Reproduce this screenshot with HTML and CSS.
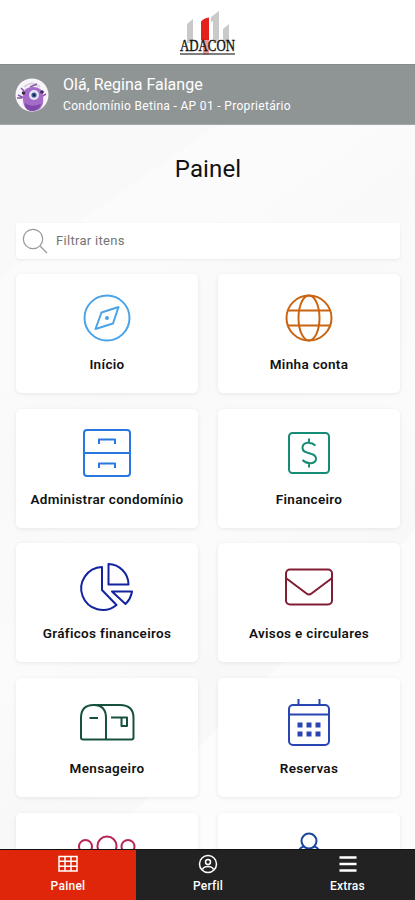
FILE: index.html
```html
<!DOCTYPE html>
<html lang="pt-BR">
<head>
<meta charset="utf-8">
<meta name="viewport" content="width=device-width, initial-scale=1">
<title>Painel</title>
<link rel="stylesheet" href="styles.css">
</head>
<body>
<div class="app">
  <header class="brand">
    <svg class="logo" viewBox="0 0 60 52" width="60" height="52">
      <path class="tower" d="M9 15l6-5v24H9zM33 8l8-6v32h-6V12l-2 1zM45 20l6-5v19h-6z"/>
      <path class="tower-red" d="M23 12.500q3-3.500 8-4v37h-6V34h-2z"/>
      <path class="veil" d="M23 31h9v14h-9z"/>
      <text x="2" y="42" textLength="55" lengthAdjust="spacingAndGlyphs">ADACON</text>
      <path class="rule" d="M2 45h55"/>
    </svg>
  </header>
  <section class="user">
    <svg class="avatar" viewBox="0 0 34 34" width="34" height="34">
      <circle cx="17" cy="17" r="16.500" fill="#f7f5f9"/>
      <path d="M9 9q8-7 16 0" fill="none" stroke="#d8d3dc" stroke-width="2"/>
      <path d="M3 17l6 3M2 20h5M31 16l-5 3M15 9l7-3M9 13l-3-3" stroke="#8d55ad" stroke-width="1.500"/>
      <path d="M8 18q0-9 10-9t10 9q2 15-11 15Q7 32 8 18z" fill="#a56bc9"/>
      <path d="M10 25q5 5 16 1-2 7-9 7t-7-8z" fill="#8148a8"/>
      <circle cx="8.500" cy="15" r="1.800" fill="#3c2a50"/><circle cx="27" cy="14" r="1.800" fill="#3c2a50"/>
      <circle cx="19" cy="17" r="5" fill="#e8e4f4"/><circle cx="19" cy="17" r="2.600" fill="#3a5a96"/><circle cx="19" cy="17" r="1.200" fill="#15284e"/>
    </svg>
    <div class="who">
      <div class="hello">Olá, Regina Falange</div>
      <div class="unit">Condomínio Betina - AP 01 - Proprietário</div>
    </div>
  </section>
  <main class="content">
    <h1>Painel</h1>
    <label class="search">
      <svg viewBox="0 0 26 26" width="26" height="26"><circle cx="11" cy="11" r="9.700"/><path d="M18 18l7 7"/></svg>
      <span>Filtrar itens</span>
    </label>
    <div class="grid">
      <a class="card"><svg class="icon sky" viewBox="0 0 60 60"><circle cx="30" cy="30" r="22.500"/><path d="M41.500 19l-5.500 16.500L18.500 41l6-16.500z"/><circle class="solid" cx="30" cy="30" r="2"/></svg><span>Início</span></a>
      <a class="card"><svg class="icon orange" viewBox="0 0 60 60"><circle cx="30" cy="30" r="22.500"/><ellipse cx="30" cy="30" rx="10.500" ry="22.500"/><path d="M9 22.500h42M9 37.500h42"/></svg><span>Minha conta</span></a>
      <a class="card"><svg class="icon blue" viewBox="0 0 60 60"><rect x="7" y="7" width="46" height="46" rx="3"/><path d="M7 30h46M22 21v-4.500h16V21M22 45v-4.500h16V45"/></svg><span>Administrar condomínio</span></a>
      <a class="card"><svg class="icon teal" viewBox="0 0 60 60"><rect x="10" y="10" width="40" height="40" rx="3.500"/><path d="M30 15.500v4M30 40v4.500M36.500 22.500C32 18.500 23.500 18.500 23.500 25c0 7 13.500 3.500 13.500 10.500 0 6-9 6-13.500 1.500"/></svg><span>Financeiro</span></a>
      <a class="card"><svg class="icon navy" viewBox="0 0 60 60"><path d="M25 10v23L39.500 48A21.500 21.500 0 1 1 25 10zM31.500 7v20.500h20A20.500 20.500 0 0 0 31.500 7zM35 34.500h20q-1 7-6.500 12.500z"/></svg><span>Gráficos financeiros</span></a>
      <a class="card"><svg class="icon wine" viewBox="0 0 60 60"><rect x="7" y="12.500" width="46" height="35" rx="4"/><path d="M7.500 21.500L27.500 36.500q2.500 2 5 0L52.500 21.500"/></svg><span>Avisos e circulares</span></a>
      <a class="card"><svg class="icon green" viewBox="0 0 60 60"><path d="M6 47.500a2 2 0 0 1-2-2V26q0-13 12.500-13T29 26v21.500zM16.500 13H43q13.500 0 13.500 13v19.500q0 2-2 2H29M12.500 26h8.500M34 25.500h16V34h-5.500v-8"/></svg><span>Mensageiro</span></a>
      <a class="card"><svg class="icon royal" viewBox="0 0 60 60"><rect x="10" y="13" width="40" height="40" rx="4"/><path d="M10 22.500h40M19.500 7v6M40.500 7v6"/><path class="solid" d="M18.500 30.500h5v5h-5zM27.500 30.500h5v5h-5zM36.500 30.500h5v5h-5zM18.500 39.500h5v5h-5zM27.500 39.500h5v5h-5zM36.500 39.500h5v5h-5z"/></svg><span>Reservas</span></a>
      <a class="card"><svg class="icon pink" viewBox="0 0 60 60"><circle cx="30" cy="19" r="9.500"/><circle cx="8.500" cy="19.500" r="6.500"/><circle cx="51" cy="19.500" r="6.500"/></svg></a>
      <a class="card"><svg class="icon person" viewBox="0 0 60 60"><circle cx="30" cy="14" r="7.500"/><path d="M19.500 25q1-4.500 5.500-5.500M35 19.500q4.500 1 5.500 5.500"/></svg></a>
    </div>
  </main>
  <nav class="tabs">
    <a class="tab active"><svg viewBox="0 0 20 20" width="20" height="20"><path d="M1 2.500h18v14.500H1zM1 7.300h18M1 12.200h18M7 2.500v14.500M13 2.500v14.500"/></svg><span>Painel</span></a>
    <a class="tab"><svg viewBox="0 0 20 20" width="20" height="20"><circle cx="10" cy="10" r="8.500"/><circle cx="10" cy="8" r="2.500"/><path d="M4.500 15.500q1-3 5.500-3t5.500 3"/></svg><span>Perfil</span></a>
    <a class="tab"><svg viewBox="0 0 20 20" width="20" height="20"><path class="bars" d="M1.500 3.500h17M1.500 10h17M1.500 16.500h17"/></svg><span>Extras</span></a>
  </nav>
</div>
</body>
</html>
```
FILE: styles.css
```css
* { box-sizing: border-box; }
body { margin: 0; font-family: Roboto, "Liberation Sans", sans-serif; color: #111; }
.app { height: 900px; display: flex; flex-direction: column; overflow: hidden; background: #fafafa; }
.brand { flex: 0 0 64px; display: flex; justify-content: center; padding-top: 9px; background: #fff; }
.logo { display: block; overflow: visible; }
.logo text { font: 17px "Liberation Serif", serif; fill: #111; stroke: #111; stroke-width: .4px; }
.tower { fill: #c9c9c9; }
.tower-red { fill: #e3201b; }
.veil { fill: #fff; opacity: .55; }
.rule { stroke: #555; stroke-width: 1.4px; }
.user { flex: 0 0 61px; display: flex; align-items: center; padding-left: 15px; gap: 14px; background: #8f9595; color: #fff; border-top: 1px solid #858b8b; border-bottom: 1px solid #a3a8a8; }
.hello { font-size: 16px; line-height: 22px; letter-spacing: 0; }
.unit { font-size: 12px; line-height: 20px; letter-spacing: .33px; }
.content { flex: 1; min-height: 0; overflow: hidden; padding: 0 15px 0 16px; background: linear-gradient(135deg, transparent 72%, #fcfcfc 72%), linear-gradient(145deg, #f9f9f9 0 15%, #fbfbfb 15% 24%, #f9f9f9 34%, #fbfbfb 55%, #f8f8f8 70%, #fcfcfc); }
h1 { margin: 28px 0 38px; text-align: center; font-size: 24px; line-height: 32px; font-weight: 400; letter-spacing: .1px; }
.search { display: flex; align-items: center; height: 36px; padding-left: 6px; gap: 8px; background: #fff; border-radius: 4px; box-shadow: 0 1px 3px rgba(0,0,0,.07); color: #747474; font-size: 13px; line-height: 20px; letter-spacing: .3px; }
.search span { margin-top: -1px; }
.search svg { fill: none; stroke: #999; stroke-width: 1.2px; }
.grid { display: grid; grid-template-columns: 1fr 1fr; grid-auto-rows: 119px; gap: 15.700px 20px; margin-top: 15px; }
.card { display: flex; flex-direction: column; align-items: center; padding-top: 14px; background: #fff; border-radius: 5px; box-shadow: 0 1px 4px rgba(0,0,0,.08); font-size: 13.500px; line-height: 20px; font-weight: 600; letter-spacing: .32px; white-space: nowrap; }
.card span { margin-top: 6px; }
.icon { width: 60px; height: 60px; overflow: visible; fill: none; stroke: currentColor; stroke-width: 2px; stroke-linejoin: round; }
.icon .solid { fill: currentColor; stroke: none; }
.sky { color: #4ba3e8; }
.orange { color: #c96410; }
.blue { color: #2878df; }
.teal { color: #168b75; }
.navy { color: #1424a0; }
.wine { color: #811c33; }
.green { color: #16523b; }
.royal { color: #2845b2; }
.pink { color: #b82459; }
.person { color: #1c469e; }
.tabs { flex: 0 0 51px; display: grid; grid-template-columns: 136px 144px 135px; background: #222; border-top: 1px solid #111; color: #fff; }
.tab { display: flex; flex-direction: column; align-items: center; padding-top: 4px; font-size: 12px; line-height: 16px; font-weight: 500; letter-spacing: .25px; }
.active { background: #df260a; }
.tab svg { fill: none; stroke: #fff; stroke-width: 1.5px; }
.tab span { margin-top: 4px; }
.tab .bars { stroke-width: 2.4px; }
```
